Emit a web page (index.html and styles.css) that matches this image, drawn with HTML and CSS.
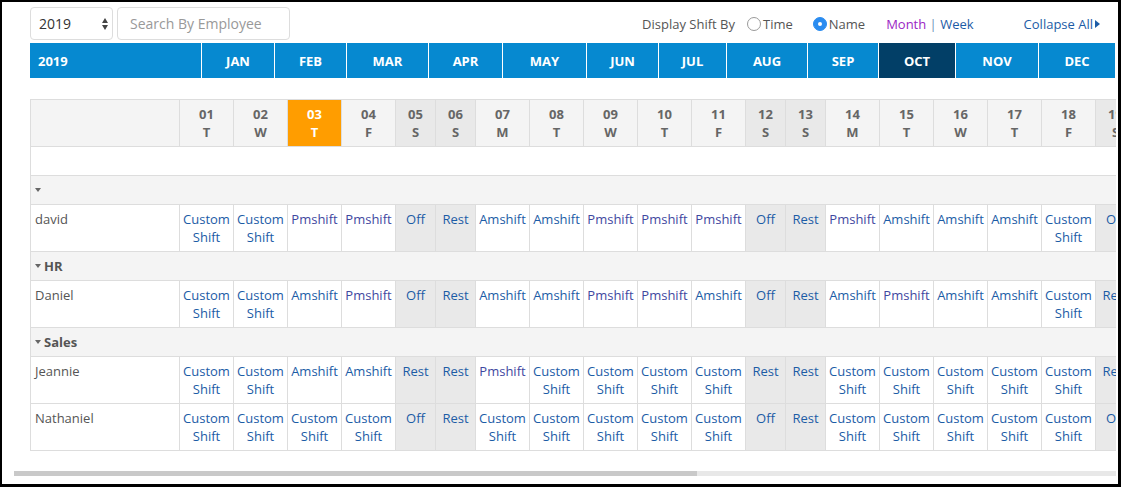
FILE: index.html
```html
<!DOCTYPE html>
<html>
<head>
  <title>Shift Schedule</title>
  <link rel="stylesheet" href="styles.css">
</head>
<body>
  <div class="frame">
    <div class="top">
      <div class="toolbar">
        <div class="year-select">
          <span>2019</span>
          <span class="arrows"><i class="up"></i><i class="down"></i></span>
        </div>
        <div class="search">Search By Employee</div>

        <div class="options">
          <span class="label">Display Shift By</span>
          <span class="radio"></span><span class="radio-text">Time</span>
          <span class="radio checked"></span><span class="radio-text">Name</span>
          <span class="view-links"><a class="visited">Month</a> <span class="sep">|</span> <a>Week</a></span>
          <a class="collapse">Collapse All <i class="tri-right"></i></a>
        </div>
      </div>

      <div class="months">
        <div class="m year" style="width:171px">2019</div>
        <div class="m" style="width:73px">JAN</div>
        <div class="m" style="width:72px">FEB</div>
        <div class="m" style="width:82px">MAR</div>
        <div class="m" style="width:74px">APR</div>
        <div class="m" style="width:84px">MAY</div>
        <div class="m" style="width:72px">JUN</div>
        <div class="m" style="width:68px">JUL</div>
        <div class="m" style="width:81px">AUG</div>
        <div class="m" style="width:71px">SEP</div>
        <div class="m current" style="width:77px">OCT</div>
        <div class="m" style="width:83px">NOV</div>
        <div class="m" style="width:77px">DEC</div>
      </div>
    </div>

    <div class="scroll">
      <table class="schedule" id="schedule">
        <colgroup id="cols"></colgroup>
        <thead>
          <tr id="day-head"><th class="name-col"></th></tr>
        </thead>
        <tbody id="rows">
          <tr class="blank"><td colspan="32"></td></tr>
        </tbody>
      </table>
    </div>

    <div class="scrollbar"><div class="thumb"></div></div>
  </div>

  <script>
// Oct 2019 starts on a Tuesday
var letters = 'TWTFSSMTWTFSSMTWTFSSMTWTFSSMTWT';
var today = 3;
var shiftNames = { C: 'Custom Shift', A: 'Amshift', P: 'Pmshift', O: 'Off', R: 'Rest' };

var groups = [
  { name: '', people: [['david', 'CCPPORAAPPPORPAAACORAAPPCORAAPP']] },
  { name: 'HR', people: [['Daniel', 'CCAPORAAPPAORAPAACROAAPPAORAAPP']] },
  { name: 'Sales', people: [
    ['Jeannie', 'CCAARRPCCCCRRCCCCCRRCCCCCRRCCCC'],
    ['Nathaniel', 'CCCCORCCCCCORCCCCCORCCCCCORCCCC']
  ] }
];

var cols = document.getElementById('cols');
var head = document.getElementById('day-head');
var body = document.getElementById('rows');

var nameCol = document.createElement('col');
nameCol.className = 'w-name';
cols.appendChild(nameCol);

for (var d = 1; d <= 31; d++) {
  var weekend = letters[d - 1] == 'S';
  var col = document.createElement('col');
  col.className = weekend ? 'w-end' : 'w-day';
  cols.appendChild(col);

  var th = document.createElement('th');
  th.innerHTML = (d < 10 ? '0' + d : d) + '<br>' + letters[d - 1];
  if (weekend) th.className = 'weekend';
  if (d == today) th.className = 'today';
  head.appendChild(th);
}

groups.forEach(function (group) {
  var gr = document.createElement('tr');
  gr.className = 'group';
  gr.innerHTML = '<td colspan="32"><i class="caret"></i>' + group.name + '</td>';
  body.appendChild(gr);

  group.people.forEach(function (person) {
    var tr = document.createElement('tr');
    tr.className = 'person';
    var html = '<td class="name">' + person[0] + '</td>';
    for (var i = 0; i < 31; i++) {
      var code = person[1][i];
      var cls = 'shift';
      if (letters[i] == 'S') cls += ' weekend';
      if (code == 'P') cls += ' pm';
      html += '<td class="' + cls + '">' + shiftNames[code] + '</td>';
    }
    tr.innerHTML = html;
    body.appendChild(tr);
  });
});
  </script>
</body>
</html>
```

FILE: styles.css
```css
* {
  box-sizing: border-box;
}

body {
  margin: 0;
  padding: 0;
  font-family: "Open Sans", "Liberation Sans", sans-serif;
  background-color: #FFFFFF;
}

.frame {
  width: 1121px;
  height: 487px;
  border-style: solid;
  border-color: #000000;
  border-width: 2px 3px 3px 2px;
  overflow: hidden;
}

.top {
  padding: 0 3px 0 28px;
}

/* toolbar */
.toolbar {
  display: flex;
  align-items: center;
  margin-top: 5px;
  height: 33px;
}

.year-select {
  width: 83px;
  height: 33px;
  border: 1px solid #dddddd;
  border-radius: 4px;
  display: flex;
  align-items: center;
  justify-content: space-between;
  padding: 0 4px 0 8px;
  font-size: 14px;
  color: #333333;
}

.arrows {
  display: flex;
  flex-direction: column;
  gap: 2px;
}

.arrows i {
  width: 0;
  height: 0;
  border-left: 3.5px solid transparent;
  border-right: 3.5px solid transparent;
}

.arrows .up {
  border-bottom: 5px solid #444444;
}

.arrows .down {
  border-top: 5px solid #444444;
}

.search {
  width: 173px;
  height: 33px;
  margin-left: 4px;
  border: 1px solid #dddddd;
  border-radius: 4px;
  padding: 0 12px;
  display: flex;
  align-items: center;
  font-size: 14px;
  color: #999999;
}

.options {
  margin-left: auto;
  margin-right: 15px;
  display: flex;
  align-items: center;
  font-size: 13px;
  color: #555555;
}

.radio {
  width: 14px;
  height: 14px;
  border-radius: 50%;
  border: 1px solid #9a9a9a;
  margin-left: 12px;
  margin-right: 2px;
  position: relative;
}

.radio.checked {
  margin-left: 20px;
  background-color: #2a8cf0;
  border-color: #2a8cf0;
}

.radio.checked::after {
  content: "";
  position: absolute;
  width: 4px;
  height: 4px;
  border-radius: 50%;
  background-color: #FFFFFF;
  top: 4px;
  left: 4px;
}

.view-links {
  margin-left: 21px;
  color: #1c5ca6;
}

.view-links a {
  color: #1c5ca6;
}

.view-links a.visited {
  color: #9b1fc4;
}

.view-links .sep {
  color: #6b8fb8;
}

.collapse {
  margin-left: 50px;
  color: #1c5ca6;
  display: flex;
  align-items: center;
  gap: 2px;
}

.tri-right {
  width: 0;
  height: 0;
  border-top: 4px solid transparent;
  border-bottom: 4px solid transparent;
  border-left: 5px solid #1c5ca6;
}

/* month bar */
.months {
  display: flex;
  margin-top: 3px;
  height: 35px;
  background-color: #0689d0;
}

.m {
  height: 35px;
  border-left: 1px solid #FFFFFF;
  color: #FFFFFF;
  font-size: 13px;
  font-weight: bold;
  display: flex;
  align-items: center;
  justify-content: center;
}

.m.year {
  border-left: none;
  justify-content: flex-start;
  padding-left: 8px;
}

.m.current {
  background-color: #023f67;
}

/* schedule table */
.scroll {
  margin: 21px 2px 0 12px;
  padding-left: 16px;
  overflow: hidden;
  height: 352px;
}

.schedule {
  border-collapse: collapse;
  table-layout: fixed;
  width: 1711px;
  font-size: 13px;
  line-height: 18px;
}

.w-name {
  width: 149px;
}

.w-day {
  width: 54px;
}

.w-end {
  width: 40px;
}

.schedule th,
.schedule td {
  border: 1px solid #dddddd;
  padding: 5px 2px;
  vertical-align: top;
  text-align: center;
  white-space: normal;
  overflow: hidden;
}

.schedule th {
  background-color: #f4f4f4;
  color: #666666;
  font-weight: bold;
}

.schedule th.weekend {
  background-color: #e9e9e9;
}

.schedule th.today {
  background-color: #ff9d00;
  color: #FFFFFF;
}

.blank td {
  height: 29px;
  background-color: #FFFFFF;
}

.group td {
  height: 29px;
  background-color: #f4f4f4;
  text-align: left;
  padding-left: 4px;
  font-weight: bold;
  color: #555555;
}

.caret {
  display: inline-block;
  width: 0;
  height: 0;
  border-left: 3.5px solid transparent;
  border-right: 3.5px solid transparent;
  border-top: 4px solid #666666;
  margin-right: 3px;
  vertical-align: 3px;
}

.person td.name {
  text-align: left;
  padding-left: 4px;
  color: #555555;
}

.shift {
  color: #1c5ca6;
}

.shift.pm {
  color: #3f479f;
}

.shift.weekend {
  background-color: #e9e9e9;
}

.scrollbar {
  margin: 20px 2px 0 12px;
  height: 5px;
  background-color: #e8e8e8;
}

.thumb {
  width: 683px;
  height: 5px;
  background-color: #c9c9c9;
}
```
